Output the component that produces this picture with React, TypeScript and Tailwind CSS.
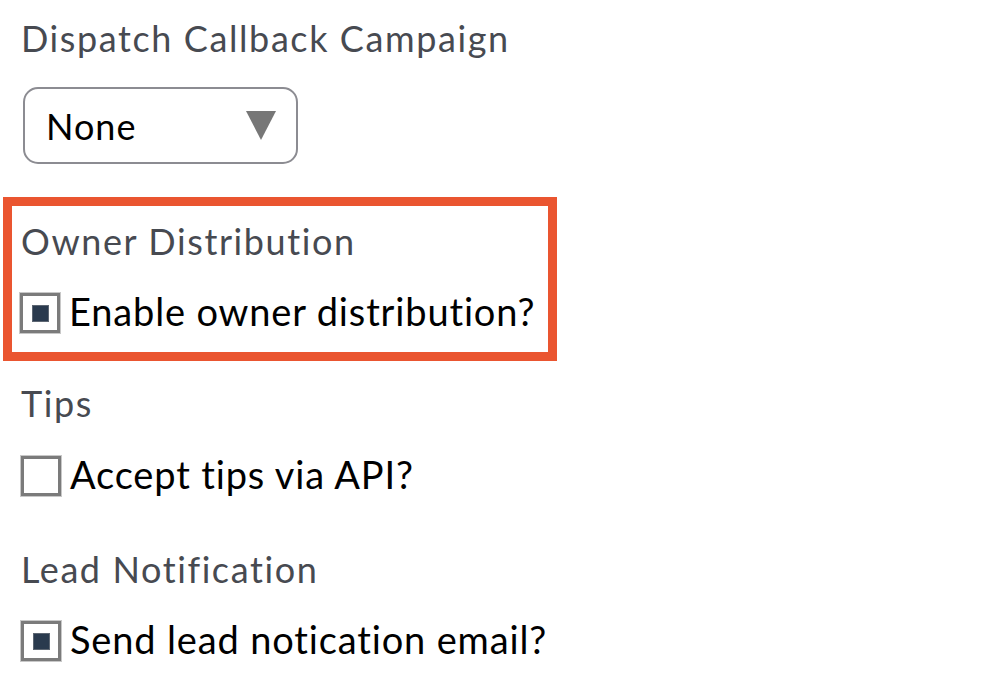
import React from 'react';

const labelCls = "block text-[36px] leading-[44px] text-[#474a51] tracking-[1.6px]";
const textCls = "text-[38px] leading-[44px] text-black tracking-[0.85px]";

function Check({ checked }: { checked: boolean }) {
  return (
    <span className="w-[40px] h-[40px] border-[3px] border-[#7b7b7b] bg-white flex items-center justify-center shrink-0 shadow-[0_0_0_1px_#c8c8c8]">
      {checked && <span className="w-[17px] h-[17px] bg-[#2a3a4e] border border-[#5d6672]" />}
    </span>
  );
}

function CheckRow({ checked, text }: { checked: boolean; text: string }) {
  return (
    <div className="flex items-end gap-[9px]">
      <Check checked={checked} />
      <span className={textCls}>{text}</span>
    </div>
  );
}

export default function App() {
  return (
    <div className="w-[982px] h-[690px] bg-white overflow-hidden" style={{ fontFamily: 'Lato, "Open Sans", sans-serif' }}>
      <div className="pl-[21px] pt-[16px]">
        <span className={labelCls}>Dispatch Callback Campaign</span>

        <div className="mt-[27px] w-[275px] h-[77px] ml-[2px] rounded-[15px] border-2 border-[#8c8c92] flex items-center justify-between pl-[21px] pr-[20px]">
          <span className="text-[36px] leading-none text-black tracking-[1px]">None</span>
          <svg width="30" height="29" viewBox="0 0 30 29">
            <polygon points="0,0 30,0 15,29" fill="#777777" />
          </svg>
        </div>
      </div>

      <div className="ml-[3px] mt-[33px] w-[554px] h-[164px] border-[9px] border-[#ea5530] pl-[9px] pt-[13px]">
        <span className={labelCls}>Owner Distribution</span>
        <div className="mt-[26px] -ml-[1px]">
          <CheckRow checked text="Enable owner distribution?" />
        </div>
      </div>

      <div className="pl-[21px] pt-[20px]">
        <span className={labelCls}>Tips</span>
        <div className="mt-[27px]">
          <CheckRow checked={false} text="Accept tips via API?" />
        </div>
        <span className={`${labelCls} mt-[51px]`}>Lead Notification</span>
        <div className="mt-[26px]">
          <CheckRow checked text="Send lead notication email?" />
        </div>
      </div>
    </div>
  );
}
